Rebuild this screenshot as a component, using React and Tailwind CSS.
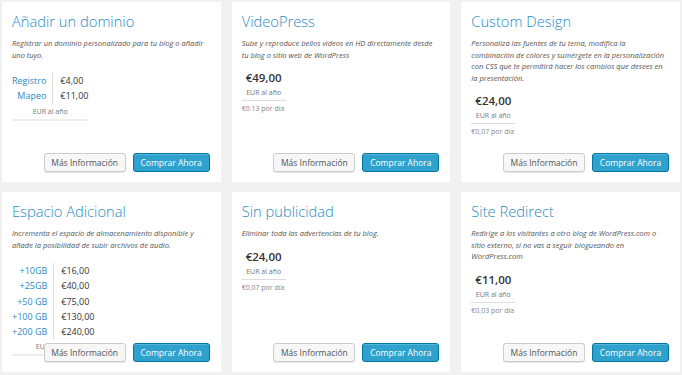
import React from "react";

const font = { fontFamily: '"Open Sans", "Liberation Sans", sans-serif' };

function Buttons() {
  return (
    <div className="absolute bottom-[10px] right-[11px] flex gap-[7px]">
      <button className="h-[19px] w-[82px] whitespace-nowrap rounded-[3px] border border-[#cccccc] bg-[#f7f7f7] text-[8.5px] leading-[17px] text-[#555555] shadow-[0_1px_0_#e6e6e6]">
        Más Información
      </button>
      <button className="h-[19px] w-[77px] whitespace-nowrap rounded-[3px] border border-[#0074a2] bg-[#2ea2cc] text-[8.5px] leading-[17px] text-white shadow-[inset_0_1px_0_rgba(120,200,230,0.5)]">
        Comprar Ahora
      </button>
    </div>
  );
}

function Card({ title, desc, children }) {
  return (
    <div className="relative h-[180px] overflow-hidden bg-white px-[10px] pt-[9px]">
      <h2 className="text-[14.7px] font-light leading-[20px] text-[#2a8bc2]">{title}</h2>
      <p className="mt-[7px] text-[7.5px] italic leading-[11.5px] text-[#555555]">{desc}</p>
      {children}
      <Buttons />
    </div>
  );
}

function PriceTable({ rows, labelW }) {
  return (
    <div className="mt-[12px] inline-block">
      <table className="border-collapse">
        <tbody>
          {rows.map(([l, p]) => (
            <tr key={l}>
              <td
                className="whitespace-nowrap border-r border-[#dddddd] pr-[6px] text-right text-[9px] leading-[15.3px] text-[#2a8bc2]"
                style={{ width: labelW }}
              >
                {l}
              </td>
              <td className="whitespace-nowrap pl-[7px] text-[9px] leading-[15.3px] text-[#333333]">{p}</td>
            </tr>
          ))}
        </tbody>
      </table>
      <div className="border-b-2 border-[#eeeeee] pb-[2px] pt-[2px] text-center text-[7px] leading-[11px] text-[#777777]">
        EUR al año
      </div>
    </div>
  );
}

function Price({ price, day }) {
  return (
    <div className="mt-[9px]">
      <div className="w-[44px] text-center">
        <div className="text-[11.5px] font-semibold leading-[16px] text-[#333333]">{price}</div>
        <div className="border-b border-[#dddddd] pb-[1px] text-[7px] leading-[13px] text-[#777777]">EUR al año</div>
      </div>
      <div className="mt-[2px] text-[7px] leading-[12px] text-[#888888]">{day}</div>
    </div>
  );
}

export default function App() {
  return (
    <div style={font} className="h-[375px] w-[682px] overflow-hidden bg-[#f1f1f1] px-[2px] pt-[2px]">
      <div className="grid grid-cols-3 gap-x-[11px] gap-y-[10px]">
        <Card title="Añadir un dominio" desc="Registrar un dominio personalizado para tu blog o añadir uno tuyo.">
          <div>
            <PriceTable rows={[["Registro", "€4,00"], ["Mapeo", "€11,00"]]} labelW="40px" />
          </div>
        </Card>
        <Card title="VideoPress" desc="Sube y reproduce bellos vídeos en HD directamente desde tu blog o sitio web de WordPress">
          <Price price="€49,00" day="€0.13 por día" />
        </Card>
        <Card
          title="Custom Design"
          desc="Personaliza las fuentes de tu tema, modifica la combinación de colores y sumérgete en la personalización con CSS que te permitirá hacer los cambios que desees en la presentación."
        >
          <Price price="€24,00" day="€0,07 por día" />
        </Card>
        <Card
          title="Espacio Adicional"
          desc="Incrementa el espacio de almacenamiento disponible y añade la posibilidad de subir archivos de audio."
        >
          <div>
            <PriceTable
              rows={[
                ["+10GB", "€16,00"],
                ["+25GB", "€40,00"],
                ["+50 GB", "€75,00"],
                ["+100 GB", "€130,00"],
                ["+200 GB", "€240,00"],
              ]}
              labelW="41px"
            />
          </div>
        </Card>
        <Card title="Sin publicidad" desc="Eliminar toda las advertencias de tu blog.">
          <Price price="€24,00" day="€0,07 por día" />
        </Card>
        <Card
          title="Site Redirect"
          desc="Redirige a los visitantes a otro blog de WordPress.com o sitio externo, si no vas a seguir blogueando en WordPress.com"
        >
          <Price price="€11,00" day="€0,03 por día" />
        </Card>
      </div>
    </div>
  );
}
